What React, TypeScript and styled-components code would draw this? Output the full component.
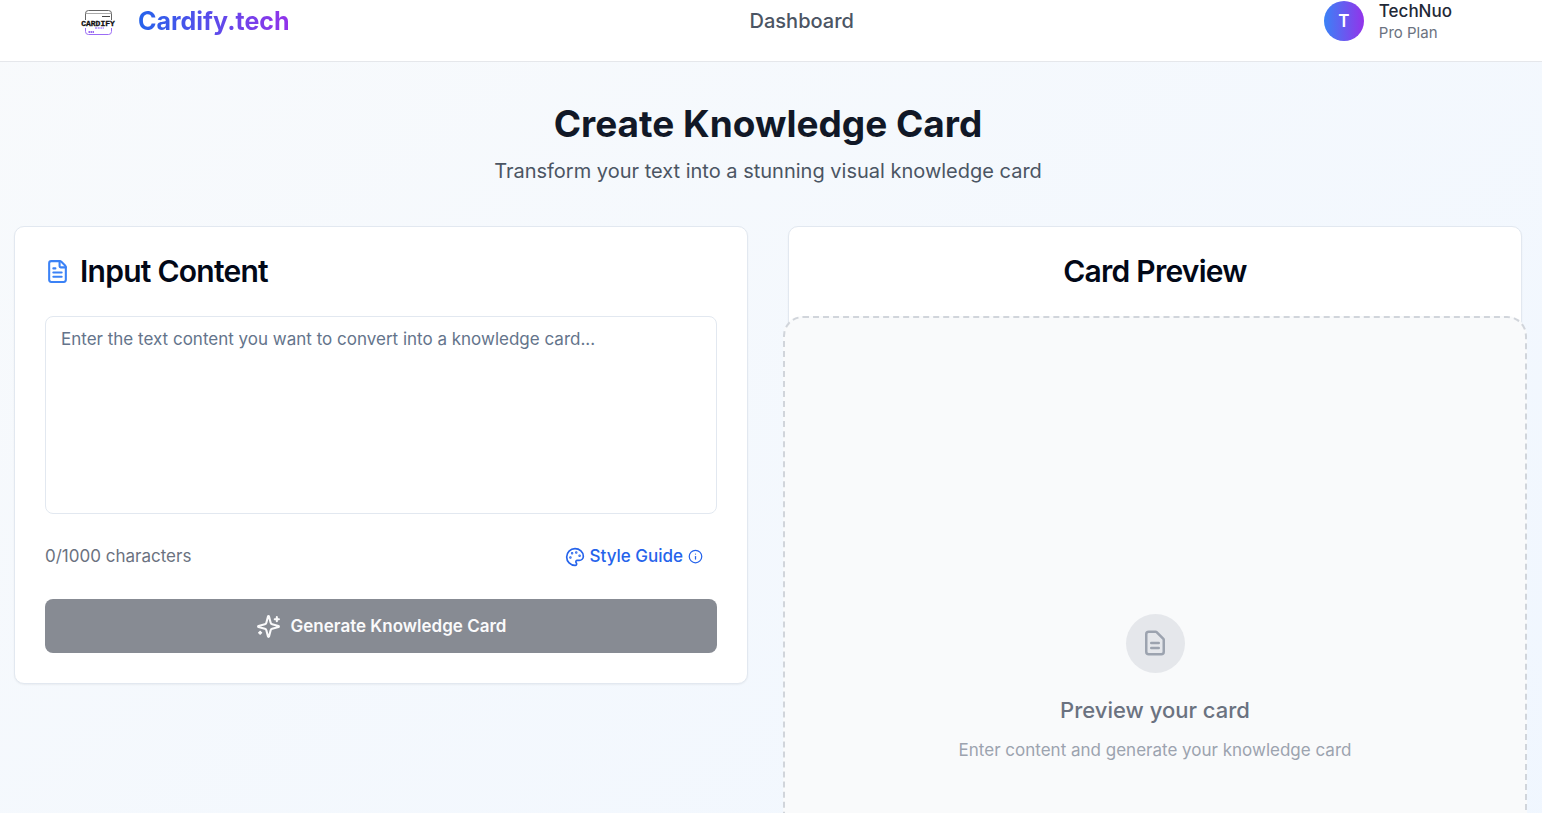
import React, { useState } from 'react';
import styled, { createGlobalStyle } from 'styled-components';
import { FileText, Info, Palette } from 'lucide-react';

const GlobalStyle = createGlobalStyle`
  *, *::before, *::after { box-sizing: border-box; }
  body { margin: 0; font-family: Inter, "Liberation Sans", sans-serif; color: #020817; }
  h1, h2, h3, p { margin: 0; }
  button, textarea { font-family: inherit; }
`;

const Page = styled.div`
  min-height: 100vh;
  background: linear-gradient(to bottom right, #f8fafc, #eff6ff);
`;

const Header = styled.header`
  display: flex;
  align-items: center;
  justify-content: space-between;
  height: 62px;
  padding: 0 80px 20px;
  background: #fff;
  border-bottom: 1px solid #e5e7eb;
`;

const Brand = styled.a`
  display: flex;
  align-items: center;
  gap: 22px;
  text-decoration: none;
`;

const BrandName = styled.span`
  font-size: 25px;
  line-height: 36px;
  font-weight: 700;
  background: linear-gradient(to right, #2563eb, #9333ea);
  background-clip: text;
  color: transparent;
`;

const NavLink = styled.a`
  font-size: 20px;
  line-height: 30px;
  font-weight: 500;
  color: #4b5563;
  text-decoration: none;
`;

const Account = styled.div`
  display: flex;
  align-items: center;
  gap: 15px;
  padding: 0 10px;
`;

const Avatar = styled.div`
  display: grid;
  place-items: center;
  width: 40px;
  height: 40px;
  border-radius: 50%;
  background: linear-gradient(to right, #3b82f6, #9333ea);
  color: #fff;
  font-size: 17px;
  font-weight: 600;
`;

const UserName = styled.p`
  font-size: 17px;
  line-height: 24px;
  font-weight: 500;
  color: #1f2937;
`;

const Plan = styled.p`
  font-size: 15px;
  line-height: 20px;
  color: #6b7280;
`;

const Main = styled.main`
  padding: 40px 20px 40px 14px;
`;

const Intro = styled.div`
  text-align: center;
  margin-bottom: 40px;
`;

const Title = styled.h1`
  font-size: 37px;
  line-height: 44px;
  font-weight: 700;
  color: #111827;
`;

const Subtitle = styled.p`
  margin-top: 10px;
  font-size: 20px;
  line-height: 30px;
  color: #4b5563;
`;

const Columns = styled.div`
  display: grid;
  grid-template-columns: 1fr 1fr;
  align-items: start;
  gap: 40px;
`;

const Card = styled.section`
  padding: 29px 30px 30px;
  background: #fff;
  border: 1px solid #e2e8f0;
  border-radius: 10px;
  box-shadow: 0 1px 2px rgba(0, 0, 0, 0.05);
`;

const CardTitle = styled.h2<{ $centered?: boolean }>`
  display: flex;
  align-items: center;
  justify-content: ${(p) => (p.$centered ? 'center' : 'flex-start')};
  gap: 10px;
  margin-bottom: 30px;
  font-size: 30px;
  line-height: 30px;
  font-weight: 600;
  letter-spacing: -0.025em;

  svg { color: #3b82f6; }
`;

const TextBox = styled.textarea`
  display: block;
  width: 100%;
  height: 198px;
  padding: 10px 15px;
  border: 1px solid #e2e8f0;
  border-radius: 8px;
  background: #fff;
  font-size: 17px;
  line-height: 25px;
  color: #020817;
  resize: none;

  &::placeholder { color: #64748b; opacity: 1; }
`;

const Meta = styled.div`
  display: flex;
  align-items: center;
  justify-content: space-between;
  margin: 20px 0;
`;

const Counter = styled.span`
  font-size: 17px;
  line-height: 25px;
  color: #6b7280;
`;

const StyleGuide = styled.button`
  display: flex;
  align-items: center;
  gap: 5px;
  height: 45px;
  padding: 0 14px;
  border: 0;
  background: none;
  font-size: 17px;
  line-height: 25px;
  font-weight: 500;
  color: #2563eb;
  cursor: pointer;
`;

const Generate = styled.button`
  display: flex;
  align-items: center;
  justify-content: center;
  gap: 10px;
  width: 100%;
  height: 54px;
  border: 0;
  border-radius: 8px;
  background: #111827;
  font-size: 17px;
  font-weight: 600;
  color: #fff;

  &:disabled { background: #878b93; color: #fafafb; }
`;

const Preview = styled.div`
  display: flex;
  flex-direction: column;
  align-items: center;
  justify-content: center;
  aspect-ratio: 1;
  margin: 0 -36px;
  border: 2px dashed #d1d5db;
  border-radius: 20px;
  background: #f9fafb;
  text-align: center;
`;

const PreviewIcon = styled.div`
  display: grid;
  place-items: center;
  width: 59px;
  height: 59px;
  margin-bottom: 20px;
  border-radius: 50%;
  background: #e5e7eb;
  color: #9ca3af;
`;

const PreviewTitle = styled.h3`
  margin-bottom: 10px;
  font-size: 22px;
  line-height: 35px;
  font-weight: 500;
  color: #6b7280;
`;

const PreviewText = styled.p`
  font-size: 17px;
  line-height: 25px;
  color: #9ca3af;
`;

const LogoMark = () => (
  <svg width="36" height="36" viewBox="0 0 36 36" fill="none" aria-hidden="true">
    <path d="M5.500 17V10.500Q5.500 7.500 8.500 7.500H28.500Q31.500 7.500 31.500 10.500V17" stroke="#666" />
    <path d="M6 10.500H31" stroke="#aaa" />
    <path d="M22 13.500H30" stroke="#444" />
    <path d="M5.500 25V28.500Q5.500 31.500 8.500 31.500H28.500Q31.500 31.500 31.500 28.500V25" stroke="#9b6cf5" />
    <path d="M8.500 29H14" stroke="#7c3aed" strokeWidth="1.500" strokeDasharray="1.500 .5" />
    <path d="M15 25H24" stroke="#a78bfa" strokeWidth="1.500" strokeDasharray="2 .7" />
    <text x="18" y="22.500" textAnchor="middle" fontFamily="Liberation Mono, monospace" fontSize="8" fontWeight="700" fill="#111" stroke="#111" strokeWidth=".3">CARDIFY</text>
  </svg>
);

const SparklesIcon = () => (
  <svg width="25" height="25" viewBox="0 0 24 24" fill="none" stroke="currentColor" strokeWidth="2" strokeLinecap="round" strokeLinejoin="round" aria-hidden="true">
    <path d="M9.937 15.500A2 2 0 0 0 8.500 14.063l-6.135-1.582a.5.5 0 0 1 0-.962L8.500 9.936A2 2 0 0 0 9.937 8.500l1.582-6.135a.5.5 0 0 1 .963 0L14.063 8.500A2 2 0 0 0 15.500 9.937l6.135 1.581a.5.5 0 0 1 0 .964L15.500 14.063a2 2 0 0 0-1.437 1.437l-1.582 6.135a.5.5 0 0 1-.963 0z" />
    <path d="M20 3v4M22 5h-4M4 17v2M5 18H3" />
  </svg>
);

const DocumentIcon = () => (
  <svg width="30" height="30" viewBox="0 0 24 24" fill="none" stroke="currentColor" strokeWidth="2" strokeLinecap="round" strokeLinejoin="round" aria-hidden="true">
    <path d="M9 12h6m-6 4h6m2 5H7a2 2 0 01-2-2V5a2 2 0 012-2h5.586a1 1 0 01.707.293l5.414 5.414a1 1 0 01.293.707V19a2 2 0 01-2 2z" />
  </svg>
);

export default function App() {
  const [text, setText] = useState('');
  return (
    <Page>
      <GlobalStyle />
      <Header>
        <Brand href="#">
          <LogoMark />
          <BrandName>Cardify.tech</BrandName>
        </Brand>
        <NavLink href="#">Dashboard</NavLink>
        <Account>
          <Avatar>T</Avatar>
          <div>
            <UserName>TechNuo</UserName>
            <Plan>Pro Plan</Plan>
          </div>
        </Account>
      </Header>
      <Main>
        <Intro>
          <Title>Create Knowledge Card</Title>
          <Subtitle>Transform your text into a stunning visual knowledge card</Subtitle>
        </Intro>
        <Columns>
          <Card>
            <CardTitle>
              <FileText size={25} />
              Input Content
            </CardTitle>
            <TextBox
              aria-label="Input Content"
              maxLength={1000}
              value={text}
              onChange={(e) => setText(e.target.value)}
              placeholder="Enter the text content you want to convert into a knowledge card..."
            />
            <Meta>
              <Counter>{text.length}/1000 characters</Counter>
              <StyleGuide type="button">
                <Palette size={20} />
                Style Guide
                <Info size={15} />
              </StyleGuide>
            </Meta>
            <Generate type="button" disabled={text.length === 0}>
              <SparklesIcon />
              Generate Knowledge Card
            </Generate>
          </Card>
          <Card>
            <CardTitle $centered>Card Preview</CardTitle>
            <Preview>
              <PreviewIcon>
                <DocumentIcon />
              </PreviewIcon>
              <PreviewTitle>Preview your card</PreviewTitle>
              <PreviewText>Enter content and generate your knowledge card</PreviewText>
            </Preview>
          </Card>
        </Columns>
      </Main>
    </Page>
  );
}
